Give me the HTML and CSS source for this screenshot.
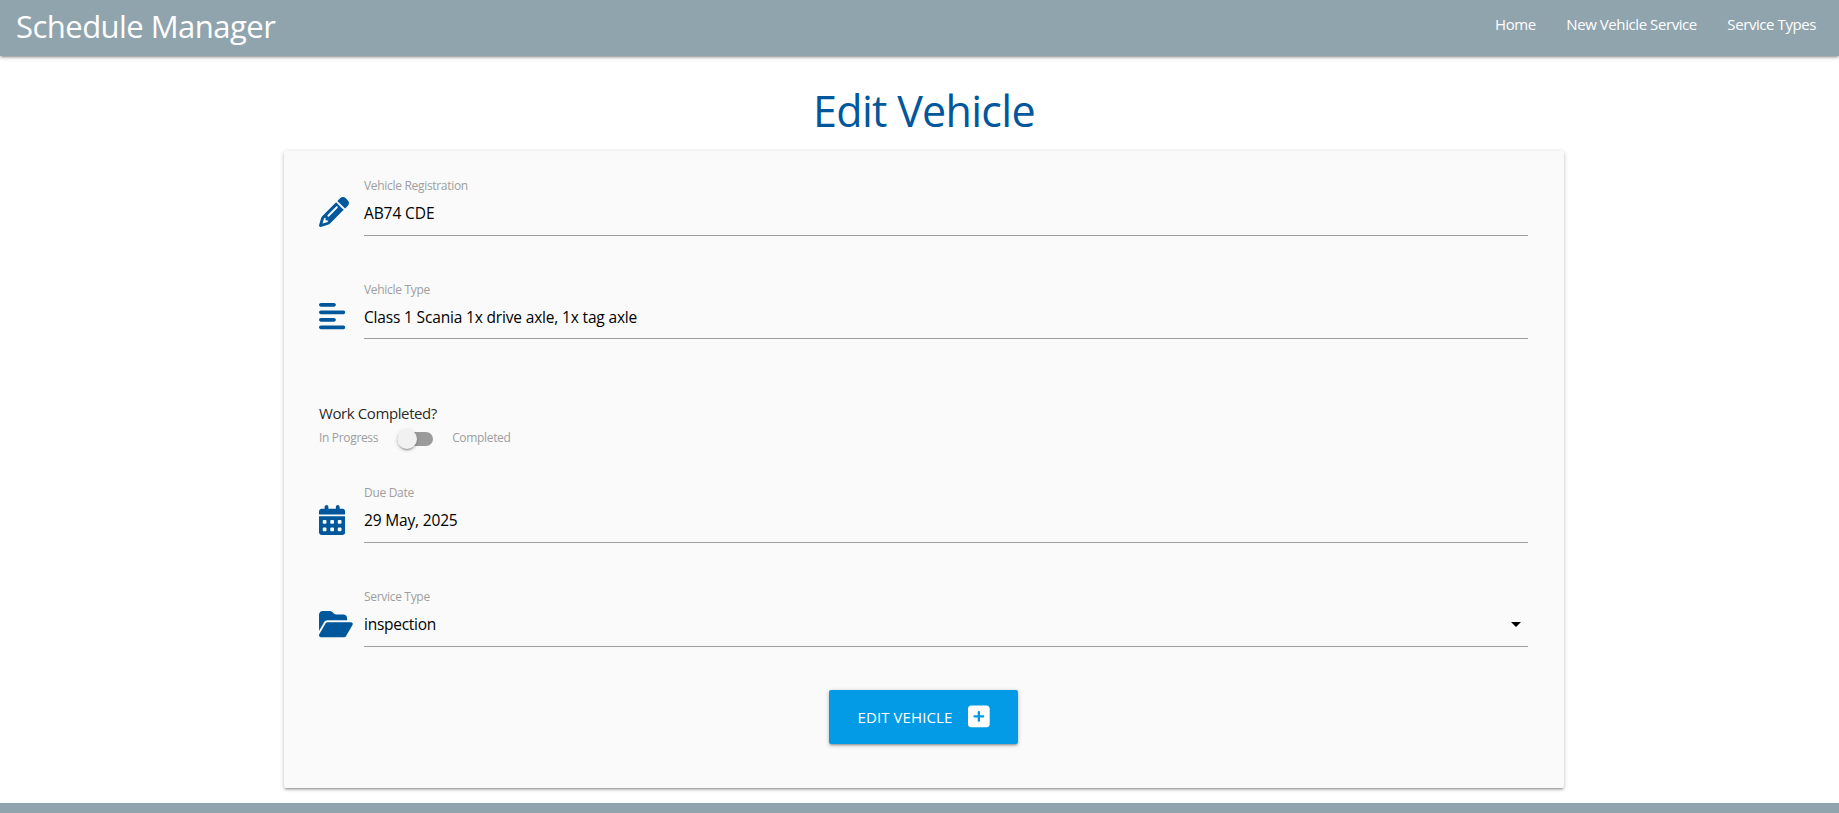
FILE: index.html
```
<!DOCTYPE html>
<html lang="en">
<head>
<meta charset="utf-8">
<title>Schedule Manager</title>
<link rel="stylesheet" href="styles.css">
</head>
<body>
<nav class="navbar">
  <a class="brand">Schedule Manager</a>
  <div class="nav-links"><a class="nav-home">Home</a><a class="nav-new">New Vehicle Service</a><a class="nav-types">Service Types</a></div>
</nav>
<main class="container">
  <h3 class="page-title">Edit Vehicle</h3>
  <form class="card">
    <div class="field field-reg">
      <svg class="prefix" width="30" height="30" viewBox="0 0 512 512"><path d="M410.3 231l11.3-11.3-33.9-33.9-62.1-62.1L291.7 89.8l-11.3 11.3-22.6 22.6L58.6 322.9c-10.4 10.4-18 23.3-22.2 37.4L1 480.7c-2.5 8.4-.2 17.5 6.1 23.7s15.3 8.5 23.7 6.1l120.3-35.4c14.1-4.2 27-11.8 37.4-22.2L387.7 253.7 410.3 231zM160 399.4l-9.1 22.7c-4 3.1-8.5 5.4-13.3 6.9L59.4 452l23-78.1c1.4-4.9 3.8-9.4 6.9-13.3l22.7-9.1v32c0 8.8 7.2 16 16 16h32zM362.7 18.7L348.3 33.2 325.7 55.8 314.3 67.1l33.9 33.9 62.1 62.1 33.9 33.9 11.3-11.3 22.6-22.6 14.5-14.5c25-25 25-65.5 0-90.5L453.3 18.7c-25-25-65.5-25-90.5 0zm-47.4 168l-144 144c-6.2 6.2-16.4 6.2-22.6 0s-6.2-16.4 0-22.6l144-144c6.2-6.2 16.4-6.2 22.6 0s6.2 16.4 0 22.6z"/></svg>
      <div class="control"><label class="label">Vehicle Registration</label><div class="value value-reg">AB74 CDE</div></div>
    </div>
    <div class="field field-type">
      <svg class="prefix" width="26.25" height="30" viewBox="0 0 448 512"><path d="M288 64c0 17.7-14.3 32-32 32H32C14.3 96 0 81.7 0 64S14.3 32 32 32H256c17.7 0 32 14.3 32 32zm0 256c0 17.7-14.3 32-32 32H32c-17.7 0-32-14.3-32-32s14.3-32 32-32H256c17.7 0 32 14.3 32 32zM0 192c0-17.7 14.3-32 32-32H416c17.7 0 32 14.3 32 32s-14.3 32-32 32H32c-17.7 0-32-14.3-32-32zM448 448c0 17.7-14.3 32-32 32H32c-17.7 0-32-14.3-32-32s14.3-32 32-32H416c17.7 0 32 14.3 32 32z"/></svg>
      <div class="control"><label class="label">Vehicle Type</label><div class="value value-type">Class 1 Scania 1x drive axle, 1x tag axle</div></div>
    </div>
    <div class="work">
      <div class="work-title">Work Completed?</div>
      <div class="switch"><span class="switch-text">In Progress</span><span class="lever"><span class="thumb"></span></span><span class="switch-text">Completed</span></div>
    </div>
    <div class="field">
      <svg class="prefix" width="26.25" height="30" viewBox="0 0 448 512"><path d="M128 0c17.7 0 32 14.3 32 32V64H288V32c0-17.7 14.3-32 32-32s32 14.3 32 32V64h48c26.5 0 48 21.5 48 48v48H0V112C0 85.5 21.5 64 48 64H96V32c0-17.7 14.3-32 32-32zM0 192H448V464c0 26.5-21.5 48-48 48H48c-26.5 0-48-21.5-48-48V192z"/><g class="days"><rect x="64" y="256" width="64" height="64" rx="16"/><rect x="192" y="256" width="64" height="64" rx="16"/><rect x="320" y="256" width="64" height="64" rx="16"/><rect x="64" y="384" width="64" height="64" rx="16"/><rect x="192" y="384" width="64" height="64" rx="16"/><rect x="320" y="384" width="64" height="64" rx="16"/></g></svg>
      <div class="control"><label class="label">Due Date</label><div class="value value-date">29 May, 2025</div></div>
    </div>
    <div class="field">
      <svg class="prefix" width="33.75" height="30" viewBox="0 0 576 512"><path d="M88.7 223.8L0 375.8V96C0 60.7 28.7 32 64 32H181.5c17 0 33.3 6.7 45.3 18.7l26.5 26.5c12 12 28.3 18.7 45.3 18.7H416c35.3 0 64 28.7 64 64v32H144c-22.8 0-43.8 12.1-55.3 31.8zm27.6 16.1C122.1 230 132.6 224 144 224H544c11.5 0 22 6.1 27.7 16.1s5.7 22.2-.1 32.1l-112 192C453.9 474 443.4 480 432 480H32c-11.5 0-22-6.1-27.7-16.1s-5.7-22.2 .1-32.1l112-192z"/></svg>
      <div class="control"><label class="label">Service Type</label><div class="value value-service"><span>inspection</span><svg width="24" height="24" viewBox="0 0 24 24"><path d="M7 10l5 5 5-5z"/></svg></div></div>
    </div>
    <button class="submit" type="button"><span>EDIT VEHICLE</span><svg width="21.7" height="24.8" viewBox="0 0 448 512"><path d="M64 32C28.7 32 0 60.7 0 96V416c0 35.3 28.7 64 64 64H384c35.3 0 64-28.7 64-64V96c0-35.3-28.7-64-64-64H64zM200 344V280H136c-13.3 0-24-10.7-24-24s10.7-24 24-24h64V168c0-13.3 10.7-24 24-24s24 10.7 24 24v64h64c13.3 0 24 10.7 24 24s-10.7 24-24 24H248v64c0 13.3-10.7 24-24 24s-24-10.7-24-24z"/></svg></button>
  </form>
</main>
<footer class="footer"></footer>
</body>
</html>
```
FILE: styles.css
```
* { box-sizing: border-box; }
body {
  margin: 0;
  height: 813px;
  overflow: hidden;
  display: flex;
  flex-direction: column;
  background: #fff;
  color: rgba(0, 0, 0, .87);
  font: 15px "Segoe UI", "Open Sans", "Noto Sans", sans-serif;
}
.navbar {
  flex: none;
  height: 56px;
  padding: 0 23px 0 16px;
  display: flex;
  justify-content: space-between;
  background: #90a4ae;
  color: #fff;
  box-shadow: 0 2px 2px 0 rgba(0,0,0,.14), 0 3px 1px -2px rgba(0,0,0,.12), 0 1px 5px 0 rgba(0,0,0,.2);
}
.brand { font-size: 31px; line-height: 52px; letter-spacing: -.53px; white-space: nowrap; }
.nav-links { display: flex; gap: 30.5px; line-height: 49px; font-size: 15px; letter-spacing: -.42px; }
.container { width: 1280px; margin-left: 284px; height: 747px; }
.page-title {
  margin: 0;
  height: 95px;
  line-height: 109px;
  text-align: center;
  font-size: 43px;
  font-weight: 400;
  letter-spacing: -.7px;
  color: #01579b;
}
.card {
  height: 637px;
  padding: 26px 36px 0 35px;
  display: flex;
  flex-direction: column;
  background: #fafafa;
  border-radius: 2px;
  box-shadow: 0 2px 2px 0 rgba(0,0,0,.14), 0 3px 1px -2px rgba(0,0,0,.12), 0 1px 5px 0 rgba(0,0,0,.2);
}
.field { flex: none; display: grid; grid-template-columns: 45px 1fr; height: 59px; margin-bottom: 45px; }
.field-reg { margin-bottom: 44px; }
.prefix { margin-top: 20.5px; fill: #01579b; }
.field-reg .prefix { margin-top: 19.7px; }
.days { fill: #fafafa; }
.label { display: block; height: 16px; line-height: 18px; font-size: 12px; letter-spacing: -.31px; color: #9e9e9e; }
.field-type .label { line-height: 20px; }
.value { height: 43px; line-height: 40px; font-size: 15.5px; letter-spacing: -.17px; color: #000; border-bottom: 1px solid #9e9e9e; }
.value-reg { letter-spacing: -.1px; }
.value-type { line-height: 42px; }
.value-service { display: flex; justify-content: space-between; letter-spacing: -.26px; }
.value-service svg { margin-top: 8px; }
.work { height: 81px; margin: 19px 0 0; }
.work-title { line-height: 20px; letter-spacing: -.4px; }
.switch { display: flex; align-items: center; height: 20px; margin-top: 6px; font-size: 12px; line-height: 16px; letter-spacing: -.33px; color: #9e9e9e; }
.switch-text { padding-bottom: 2px; }
.lever { width: 36px; height: 14px; margin: 0 19px 0 19px; border-radius: 15px; background: rgba(0,0,0,.38); display: flex; align-items: center; }
.thumb { width: 20px; height: 20px; flex: none; border-radius: 50%; background: #f1f1f1; box-shadow: 0 3px 1px -2px rgba(0,0,0,.2), 0 2px 2px 0 rgba(0,0,0,.14), 0 1px 5px 0 rgba(0,0,0,.12); }
.submit {
  flex: none;
  align-self: center;
  width: 189px;
  height: 54px;
  margin: -2px 0 0;
  padding: 0 28px 0 28.5px;
  display: flex;
  align-items: center;
  justify-content: space-between;
  border: 0;
  border-radius: 2px;
  background: #039be5;
  color: #fff;
  font: inherit;
  letter-spacing: .1px;
  box-shadow: 0 2px 2px 0 rgba(0,0,0,.14), 0 3px 1px -2px rgba(0,0,0,.12), 0 1px 5px 0 rgba(0,0,0,.2);
}
.submit svg { fill: #fff; margin-bottom: 1px; }
.footer { flex: none; height: 10px; background: #90a4ae; }
```
